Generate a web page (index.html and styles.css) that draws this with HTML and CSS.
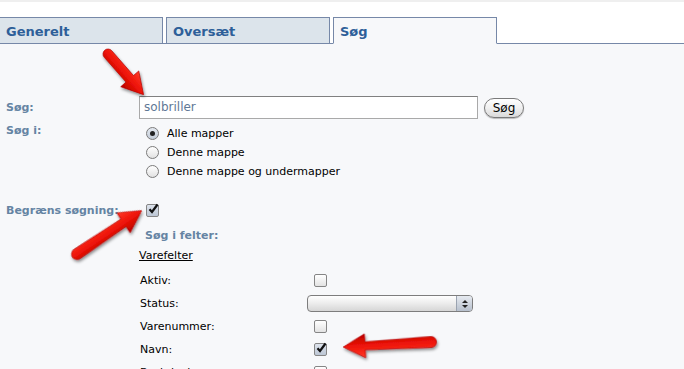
FILE: index.html
```html
<!DOCTYPE html>
<html lang="da">
<head>
<meta charset="UTF-8" />
<title>Søg</title>
<link rel="stylesheet" href="styles.css">
</head>
<body>
<div class="page">
  <div class="topstrip"></div>
  <div class="tabbar">
    <div class="tab">Generelt</div>
    <div class="tab">Oversæt</div>
    <div class="tab active">Søg</div>
  </div>

  <div class="panel">
    <div class="row search-row">
      <div class="label">Søg:</div>
      <div class="search-input">solbriller</div>
      <div class="btn">Søg</div>
    </div>

    <div class="row scope-row">
      <div class="label top">Søg i:</div>
      <div class="options">
        <div class="option"><span class="radio on"></span>Alle mapper</div>
        <div class="option"><span class="radio"></span>Denne mappe</div>
        <div class="option"><span class="radio"></span>Denne mappe og undermapper</div>
      </div>
    </div>

    <div class="row limit-row">
      <div class="label">Begræns søgning:</div>
      <span class="cb on indent">
        <svg viewBox="0 0 12 12"><path d="M2.5 6.2 L5 9 L10.5 1.5" /></svg>
      </span>
    </div>

    <div class="subhead">Søg i felter:</div>
    <div class="group-title">Varefelter</div>

    <div class="field">
      <div class="field-name">Aktiv:</div>
      <span class="cb"></span>
    </div>
    <div class="field">
      <div class="field-name">Status:</div>
      <div class="select"><span class="spin"><i class="up"></i><i class="down"></i></span></div>
    </div>
    <div class="field">
      <div class="field-name">Varenummer:</div>
      <span class="cb"></span>
    </div>
    <div class="field">
      <div class="field-name">Navn:</div>
      <span class="cb on">
        <svg viewBox="0 0 12 12"><path d="M2.5 6.2 L5 9 L10.5 1.5" /></svg>
      </span>
    </div>
    <div class="field">
      <div class="field-name">Beskrivelse:</div>
      <span class="cb"></span>
    </div>
  </div>

  <!-- røde pile lagt oven på formularen -->
  <svg class="arrows" viewBox="0 0 684 369" aria-hidden="true">
    <defs>
      <linearGradient id="red" x1="0" y1="0" x2="0" y2="1">
        <stop offset="0" stop-color="#ff3b2a"/>
        <stop offset="0.5" stop-color="#ee1408"/>
        <stop offset="1" stop-color="#b80000"/>
      </linearGradient>
      <filter id="shade" x="-30%" y="-30%" width="160%" height="160%">
        <feDropShadow dx="1" dy="2" stdDeviation="1.5" flood-color="#000" flood-opacity="0.45"/>
      </filter>
    </defs>
    <g filter="url(#shade)" fill="url(#red)" stroke="#b00000" stroke-width="0.6" stroke-linejoin="round">
      <g transform="translate(108 54) rotate(48.8)">
        <path d="M0,-5 L33,-5 L33,-12 L54,0 L33,12 L33,5 L0,5 A5,5 0 0 1 0,-5 Z"/>
      </g>
      <g transform="translate(77 254) rotate(-33.9)">
        <path d="M0,-5.5 L56,-4.5 L56,-12 L78,0 L56,12 L56,4.5 L0,5.5 A5.5,5.5 0 0 1 0,-5.5 Z"/>
      </g>
      <g transform="translate(431 342) rotate(176.7)">
        <path d="M0,-5.5 L66,-4 L66,-12 L88,0 L66,12 L66,4 L0,5.5 A5.5,5.5 0 0 1 0,-5.5 Z"/>
      </g>
    </g>
  </svg>
</div>
</body>
</html>
```

FILE: styles.css
```css
html, body {
  margin: 0;
  padding: 0;
  background: #fff;
}
body {
  font-family: "DejaVu Sans", Verdana, sans-serif;
  font-size: 11px;
  color: #000;
}
.page {
  position: relative;
  width: 684px;
  height: 369px;
  overflow: hidden;
}
.topstrip {
  height: 2px;
  background: #efefef;
}
.tabbar {
  display: flex;
  gap: 3px;
  margin-top: 15px;
  border-bottom: 1px solid #7688a8;
}
.tab {
  width: 156px;
  height: 25px;
  line-height: 27px;
  padding-left: 6px;
  margin-bottom: -1px;
  border: 1px solid #7688a8;
  background: #dce4eb;
  color: #2e5f99;
  font-weight: bold;
  font-size: 13px;
}
.tab:first-child {
  margin-left: -2px;
  padding-left: 7px;
}
.tab.active {
  background: #f7f8fa;
  border-bottom-color: #f7f8fa;
}
.panel {
  background: #f7f8fa;
  height: 330px;
  padding-top: 52px;
  box-sizing: border-box;
}
.row {
  display: flex;
  align-items: center;
}
.label {
  width: 133px;
  padding-left: 6px;
  color: #6584a3;
  font-weight: bold;
}
.search-row {
  height: 23px;
}
.search-input {
  width: 333px;
  height: 21px;
  line-height: 21px;
  padding-left: 4px;
  border: 1px solid #a9a9a9;
  border-top-color: #808080;
  background: #fff;
  color: #5f7896;
  font-size: 12px;
}
.btn {
  margin-left: 6px;
  width: 38px;
  height: 18px;
  line-height: 18px;
  text-align: center;
  border: 1px solid #7a7a7a;
  border-radius: 10px;
  background: linear-gradient(#ffffff, #f0f0f0 50%, #d9d9d9);
  box-shadow: 0 1px 1px rgba(0,0,0,0.25);
  font-size: 12px;
}
.scope-row {
  align-items: flex-start;
  margin-top: 5px;
}
.label.top {
  line-height: 13px;
}
.options {
  padding-left: 7px;
}
.option {
  display: flex;
  align-items: center;
  gap: 8px;
  height: 19px;
}
.radio {
  width: 11px;
  height: 11px;
  border: 1px solid #7b7b7b;
  border-radius: 50%;
  background: linear-gradient(#ffffff, #e2e2e2);
  display: flex;
  align-items: center;
  justify-content: center;
}
.radio.on {
  background: linear-gradient(#e4e9f0, #c3ccd8);
}
.radio.on::after {
  content: "";
  width: 5px;
  height: 5px;
  border-radius: 50%;
  background: #222;
}
.limit-row {
  margin-top: 22px;
  height: 14px;
}
.cb {
  display: inline-block;
  width: 11px;
  height: 11px;
  border: 1px solid #858585;
  border-radius: 2px;
  background: linear-gradient(#ffffff, #e3e3e3);
  position: relative;
}
.cb.on {
  background: linear-gradient(#dde3ec, #bcc6d4);
}
.cb svg {
  position: absolute;
  left: 0;
  top: -2px;
  width: 12px;
  height: 12px;
  fill: none;
  stroke: #111;
  stroke-width: 2.2;
}
.cb.indent {
  margin-left: 7px;
}
.subhead {
  margin-top: 12px;
  padding-left: 145px;
  line-height: 14px;
  color: #6584a3;
  font-weight: bold;
}
.group-title {
  margin-top: 6px;
  padding-left: 139px;
  line-height: 14px;
  text-decoration: underline;
}
.group-title + .field {
  margin-top: 6px;
}
.field {
  display: flex;
  align-items: center;
  height: 23px;
  padding-left: 140px;
}
.field-name {
  width: 174px;
}
.select {
  margin-left: -7px;
  width: 164px;
  height: 15px;
  border: 1px solid #7d7d7d;
  border-radius: 4px;
  background: linear-gradient(#ffffff, #ececec 50%, #d6d6d6);
  display: flex;
  justify-content: flex-end;
  overflow: hidden;
}
.spin {
  width: 15px;
  border-left: 1px solid #9aa3b0;
  background: linear-gradient(#e6eaf0, #b7c0cd);
  display: flex;
  flex-direction: column;
  align-items: center;
  justify-content: center;
  gap: 2px;
}
.spin i {
  width: 0;
  height: 0;
  border-left: 3px solid transparent;
  border-right: 3px solid transparent;
}
.spin .up {
  border-bottom: 3px solid #222;
}
.spin .down {
  border-top: 3px solid #222;
}
.arrows {
  position: absolute;
  left: 0;
  top: 0;
  width: 684px;
  height: 369px;
  pointer-events: none;
}
```
